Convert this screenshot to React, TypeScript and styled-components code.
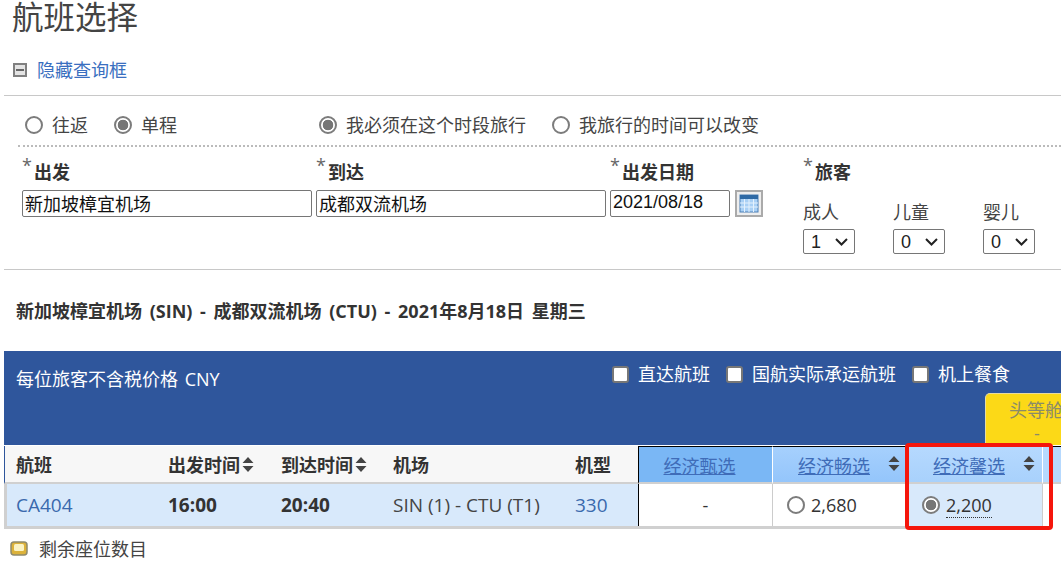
import * as React from "react";
import styled, { createGlobalStyle } from "styled-components";

const GlobalStyle = createGlobalStyle`
    html, body {
        margin: 0;
        padding: 0;
        background: #fff;
    }
    body {
        font-family: "Open Sans", "Noto Sans CJK SC", sans-serif;
        font-size: 18px;
        color: #333;
        overflow: hidden;
    }
`;

const FIELD_FONT = `"Liberation Sans", "Noto Sans CJK SC", sans-serif`;

const CHEVRON = `url("data:image/svg+xml,%3Csvg xmlns='http://www.w3.org/2000/svg' width='13' height='8'%3E%3Cpath d='M1 1l5.500 5.500L12 1' fill='none' stroke='%23222' stroke-width='2'/%3E%3C/svg%3E")`;

const Page = styled.div`
    width: 1061px;
    height: 567px;
    overflow: hidden;
    position: relative;
`;

const Title = styled.h1`
    margin: 0;
    padding-left: 12px;
    height: 32px;
    font-size: 31.5px;
    line-height: 33px;
    font-weight: 400;
    color: #444;
`;

const HideToggle = styled.div`
    display: flex;
    align-items: center;
    gap: 10px;
    height: 28px;
    margin-top: 24px;
    padding-left: 13px;
`;

const ToggleLink = styled.a`
    color: #3a6fc0;
    font-size: 18px;
    line-height: 28px;
`;

const SearchForm = styled.form`
    margin: 11px 0 0 4px;
    height: 173px;
    border-top: 1px solid #c8c8c8;
    border-bottom: 1px solid #c8c8c8;
`;

const TripRow = styled.div`
    display: flex;
    align-items: center;
    box-sizing: border-box;
    height: 51px;
    margin-left: 14px;
    padding: 8px 0 0 7px;
    border-bottom: 2px dotted #bbb;
`;

const RadioGroup = styled.div<{ $width: number }>`
    display: flex;
    width: ${p => p.$width}px;
    gap: 26px;
`;

const RadioLabel = styled.label`
    display: flex;
    align-items: center;
    gap: 9px;
    color: #444;
    line-height: 24px;
`;

const Radio = styled.input.attrs({ type: "radio" })`
    appearance: none;
    flex: none;
    width: 18px;
    height: 18px;
    margin: 0;
    border: 2px solid #7c7c7c;
    border-radius: 50%;
    background: #fff;
    &:checked {
        background: radial-gradient(circle, #767676 0 5px, #fff 5.6px);
    }
`;

const FieldRow = styled.div`
    display: flex;
    margin-left: 18px;
    padding-top: 9px;
`;

const Field = styled.div<{ $width: number }>`
    width: ${p => p.$width}px;
    flex: none;
`;

const FieldLabel = styled.div`
    display: flex;
    height: 26px;
    line-height: 32px;
    font-weight: 700;
    font-size: 18px;
    color: #333;
`;

const Star = styled.span`
    font-weight: 400;
    font-size: 18px;
    line-height: 18px;
    width: 12px;
    color: #666;
`;

const TextBox = styled.input<{ $width: number }>`
    display: block;
    box-sizing: border-box;
    width: ${p => p.$width}px;
    height: 27px;
    margin: 8px 0 0;
    padding: 0 0 2px 2px;
    border: 1px solid #767676;
    border-radius: 2px;
    font-family: ${FIELD_FONT};
    font-size: 18px;
    color: #111;
`;

const DateLine = styled.div`
    display: flex;
    gap: 5px;
`;

const CalendarButton = styled.span`
    display: block;
    margin-top: 8px;
    width: 28px;
    height: 27px;
`;

const Passengers = styled.div`
    display: flex;
    margin-top: 17px;
`;

const Passenger = styled.div`
    width: 90px;
    flex: none;
    color: #444;
    line-height: 26px;
`;

const CountSelect = styled.select`
    display: block;
    appearance: none;
    box-sizing: border-box;
    width: 52px;
    height: 25px;
    margin-top: 4px;
    padding: 0 0 0 7px;
    border: 1px solid #767676;
    border-radius: 2px;
    background: #fff ${CHEVRON} no-repeat 31px 8px;
    font-family: ${FIELD_FONT};
    font-size: 18px;
    color: #222;
`;

const RouteHeading = styled.h2`
    margin: 28px 0 0;
    padding-left: 16px;
    height: 26px;
    font-size: 18px;
    line-height: 26px;
    word-spacing: 3px;
    font-weight: 700;
    color: #333;
`;

const FiltersPanel = styled.div`
    display: flex;
    flex-direction: column;
    height: 94px;
    margin: 27px 0 0 4px;
    padding: 0 0 0 12px;
    background: #2f569c;
    color: #fff;
`;

const PanelTop = styled.div`
    display: flex;
    height: 42px;
    padding-top: 6px;
`;

const PriceNote = styled.div`
    width: 596px;
    flex: none;
    line-height: 44px;
    word-spacing: 2px;
`;

const Filters = styled.div`
    display: flex;
    gap: 16px;
    height: 32px;
    margin-top: 1px;
    line-height: 32px;
`;

const FilterLabel = styled.label`
    display: flex;
    align-items: center;
    gap: 9px;
    white-space: nowrap;
`;

const Check = styled.input.attrs({ type: "checkbox" })`
    appearance: none;
    width: 17px;
    height: 17px;
    margin: 0;
    border: 2px solid #777;
    border-radius: 3px;
    background: #fff;
    box-sizing: border-box;
`;

const CabinTab = styled.div`
    box-sizing: border-box;
    width: 110px;
    height: 52px;
    margin: -6px 0 0 969px;
    padding: 4px 0 0 23px;
    flex: none;
    border: 1px solid #e8dba0;
    border-bottom: 0;
    border-radius: 5px 0 0 0;
    background: #fcd917;
    color: #8a8a6a;
    font-size: 18px;
    line-height: 24px;
`;

const TabDash = styled.div`
    margin-top: 2px;
    padding-left: 25px;
    line-height: 18px;
`;

const FlightGrid = styled.div`
    display: grid;
    grid-template-columns: 164px 113px 112px 182px 63px 134px 135px 135px 19px;
    grid-template-rows: 38px 42px 3px;
    margin-left: 4px;
    width: 1057px;
    border-top: 1px solid #fff;
`;

const HeadCell = styled.div<{ $first?: boolean }>`
    display: flex;
    align-items: center;
    gap: 2px;
    padding-left: ${p => (p.$first ? 11 : 0)}px;
    box-sizing: border-box;
    background: #f7f7f7;
    border-bottom: 2px solid #d0d0d0;
    ${p => p.$first && "border-left: 1px solid #2f569c;"}
    font-weight: 700;
    font-size: 18px;
    color: #333;
`;

const FareHead = styled.div<{ $bg: string; $first?: boolean }>`
    position: relative;
    display: flex;
    align-items: center;
    justify-content: center;
    box-sizing: border-box;
    padding-right: 12px;
    background: ${p => p.$bg};
    border-top: 1px solid #000;
    border-left: 1px solid ${p => (p.$first ? "#000" : "#fff")};
    border-bottom: 2px solid #d0d0d0;
`;

const FareName = styled.a`
    color: #3f6cb8;
    text-decoration: underline;
    text-decoration-thickness: 1px;
    text-underline-offset: 1px;
`;

const FareSort = styled.span`
    position: absolute;
    right: 7px;
    top: 8px;
    display: flex;
`;

const FlightCell = styled.div<{ $first?: boolean }>`
    display: flex;
    align-items: center;
    box-sizing: border-box;
    padding-left: ${p => (p.$first ? 9 : 0)}px;
    background: #d8e9fb;
    ${p => p.$first && "border-left: 3px solid #d0d0d0;"}
    font-size: 19px;
    color: #444;
`;

const FlightLink = styled.a`
    color: #3a69ad;
`;

const TimeText = styled.strong`
    font-weight: 700;
    color: #333;
`;

const FareCell = styled.div<{ $selected?: boolean; $empty?: boolean; $first?: boolean }>`
    display: flex;
    align-items: center;
    justify-content: ${p => (p.$empty ? "center" : "flex-start")};
    gap: 6px;
    box-sizing: border-box;
    padding-left: ${p => (p.$empty ? 0 : 14)}px;
    background: ${p => (p.$selected ? "#d8e9fb" : "#fff")};
    border-left: 1px solid ${p => (p.$first ? "#000" : "#ccc")};
    color: #333;
`;

const DividerCell = styled.div`
    border-left: 1px solid #ccc;
    background: #fff;
`;

const Amount = styled.span<{ $dotted?: boolean }>`
    line-height: 24px;
    ${p => p.$dotted && "border-bottom: 1px dotted #333;"}
`;

const BottomRule = styled.div`
    grid-column: 1 / span 8;
    background: #d0d0d0;
`;

const RedBox = styled.div`
    position: absolute;
    left: 905px;
    top: 443px;
    width: 148px;
    height: 87px;
    box-sizing: border-box;
    border: 4px solid #f5160c;
    border-radius: 4px;
    pointer-events: none;
`;

const Legend = styled.div`
    display: flex;
    align-items: center;
    gap: 11px;
    height: 26px;
    margin-top: 6px;
    padding-left: 10px;
    color: #444;
`;

const SortIcon = () => (
    <svg width="12" height="17" viewBox="0 0 12 17">
        <path d="M6 1l5.500 6H.5z M6 16L.5 10h11z" fill="#444" />
    </svg>
);

const MinusBoxIcon = () => (
    <svg width="14" height="14" viewBox="0 0 14 14">
        <rect x="1" y="1" width="12" height="12" fill="#e4e4e4" stroke="#808080" strokeWidth="2" />
        <rect x="3" y="6" width="8" height="2" fill="#666" />
    </svg>
);

const CalendarIcon = () => (
    <svg width="28" height="27" viewBox="0 0 28 27">
        <rect x="1" y="1" width="26" height="25" fill="#eee" stroke="#aaa" strokeWidth="2" />
        <rect x="5" y="5" width="18" height="17" fill="#a9d0f5" stroke="#4b7fb5" />
        <rect x="5" y="5" width="18" height="4" fill="#2f6aa5" />
        <path d="M5 13h18M5 17h18M9.500 9v13M14 9v13M18.500 9v13" stroke="#e4f1fd" />
    </svg>
);

const SeatIcon = () => (
    <svg width="18" height="15" viewBox="0 0 18 15">
        <rect x="1" y="1" width="16" height="13" rx="3" fill="#dcb23a" stroke="#8f8a6c" strokeWidth="1.500" />
        <rect x="4" y="3" width="10" height="7" rx="1.500" fill="#fbf3c4" />
    </svg>
);

const FARES = [
    { name: "经济甄选", bg: "#7ab7f5", sortable: false },
    { name: "经济畅选", bg: "linear-gradient(#a6d0fd, #94c5fb)", sortable: true },
    { name: "经济馨选", bg: "linear-gradient(#b6d9fe, #a8d1fc)", sortable: true },
];

const App = () => (
    <Page>
        <GlobalStyle />
        <Title>航班选择</Title>
        <HideToggle>
            <MinusBoxIcon />
            <ToggleLink>隐藏查询框</ToggleLink>
        </HideToggle>
        <SearchForm>
            <TripRow>
                <RadioGroup $width={294}>
                    <RadioLabel><Radio name="trip" />往返</RadioLabel>
                    <RadioLabel><Radio name="trip" defaultChecked />单程</RadioLabel>
                </RadioGroup>
                <RadioGroup $width={500}>
                    <RadioLabel><Radio name="flex" defaultChecked />我必须在这个时段旅行</RadioLabel>
                    <RadioLabel><Radio name="flex" />我旅行的时间可以改变</RadioLabel>
                </RadioGroup>
            </TripRow>
            <FieldRow>
                <Field $width={294}>
                    <FieldLabel><Star>*</Star>出发</FieldLabel>
                    <TextBox $width={290} defaultValue="新加坡樟宜机场" />
                </Field>
                <Field $width={294}>
                    <FieldLabel><Star>*</Star>到达</FieldLabel>
                    <TextBox $width={290} defaultValue="成都双流机场" />
                </Field>
                <Field $width={193}>
                    <FieldLabel><Star>*</Star>出发日期</FieldLabel>
                    <DateLine>
                        <TextBox $width={120} defaultValue="2021/08/18" />
                        <CalendarButton><CalendarIcon /></CalendarButton>
                    </DateLine>
                </Field>
                <Field $width={270}>
                    <FieldLabel><Star>*</Star>旅客</FieldLabel>
                    <Passengers>
                        <Passenger>成人<CountSelect defaultValue="1"><option>0</option><option>1</option></CountSelect></Passenger>
                        <Passenger>儿童<CountSelect defaultValue="0"><option>0</option><option>1</option></CountSelect></Passenger>
                        <Passenger>婴儿<CountSelect defaultValue="0"><option>0</option><option>1</option></CountSelect></Passenger>
                    </Passengers>
                </Field>
            </FieldRow>
        </SearchForm>
        <RouteHeading>新加坡樟宜机场 (SIN) - 成都双流机场 (CTU) - 2021年8月18日 星期三</RouteHeading>
        <FiltersPanel>
            <PanelTop>
                <PriceNote>每位旅客不含税价格 CNY</PriceNote>
                <Filters>
                    <FilterLabel><Check />直达航班</FilterLabel>
                    <FilterLabel><Check />国航实际承运航班</FilterLabel>
                    <FilterLabel><Check />机上餐食</FilterLabel>
                </Filters>
            </PanelTop>
            <CabinTab>头等舱<TabDash>-</TabDash></CabinTab>
        </FiltersPanel>
        <FlightGrid>
            <HeadCell $first>航班</HeadCell>
            <HeadCell>出发时间<SortIcon /></HeadCell>
            <HeadCell>到达时间<SortIcon /></HeadCell>
            <HeadCell>机场</HeadCell>
            <HeadCell>机型</HeadCell>
            {FARES.map((fare, i) => (
                <FareHead key={fare.name} $bg={fare.bg} $first={i === 0}>
                    <FareName>{fare.name}</FareName>
                    {fare.sortable && <FareSort><SortIcon /></FareSort>}
                </FareHead>
            ))}
            <FareHead $bg="#b6d9fe" />

            <FlightCell $first><FlightLink>CA404</FlightLink></FlightCell>
            <FlightCell><TimeText>16:00</TimeText></FlightCell>
            <FlightCell><TimeText>20:40</TimeText></FlightCell>
            <FlightCell>SIN (1) - CTU (T1)</FlightCell>
            <FlightCell><FlightLink>330</FlightLink></FlightCell>
            <FareCell $empty $first>-</FareCell>
            <FareCell><Radio name="fare" /><Amount>2,680</Amount></FareCell>
            <FareCell $selected><Radio name="fare" defaultChecked /><Amount $dotted>2,200</Amount></FareCell>
            <DividerCell />
            <BottomRule />
        </FlightGrid>
        <Legend><SeatIcon />剩余座位数目</Legend>
        <RedBox />
    </Page>
);

export default App;
